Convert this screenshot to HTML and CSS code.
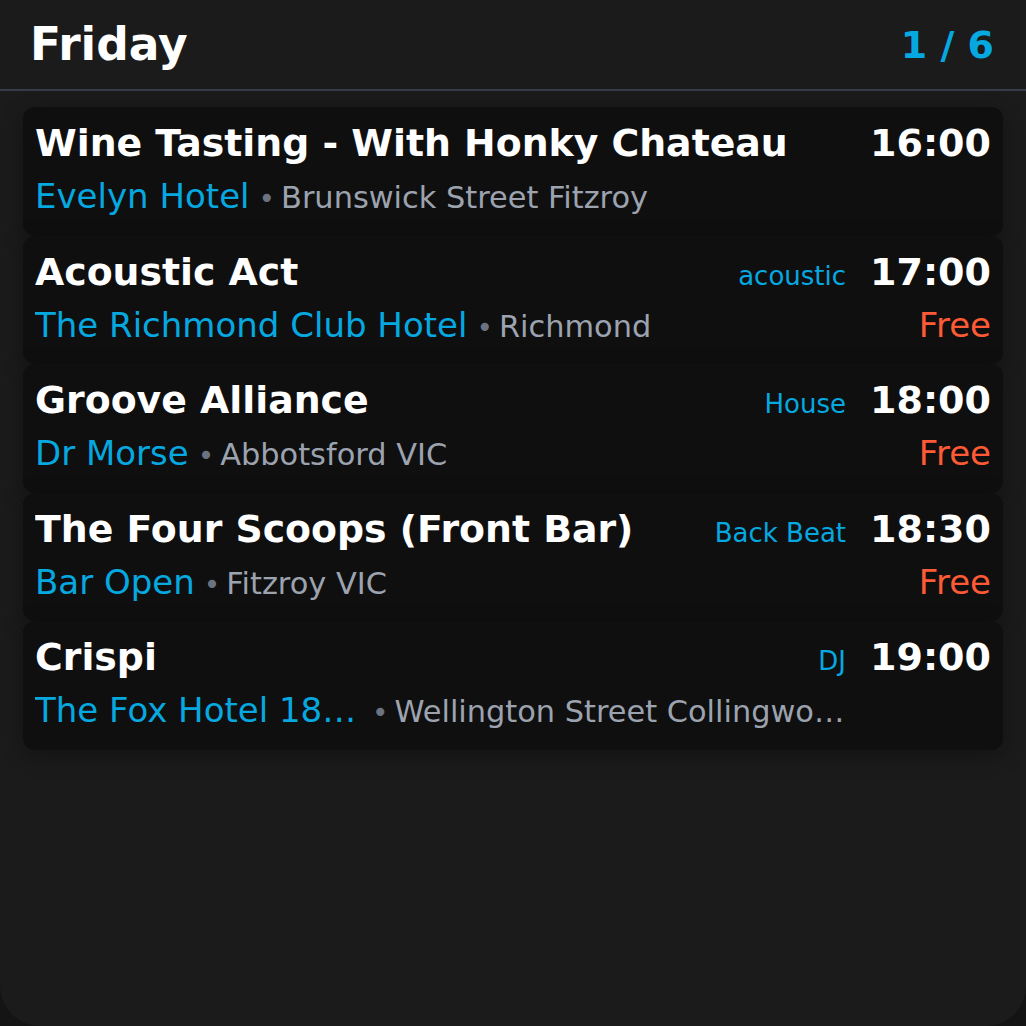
FILE: index.html
```html
<!DOCTYPE html>
<html lang="en">
<head>
<meta charset="utf-8">
<title>Friday</title>
<link rel="stylesheet" href="styles.css">
</head>
<body>
<div class="app">
  <header class="header">
    <h1 class="day">Friday</h1>
    <div class="pager">1 / 6</div>
  </header>
  <main class="list">
    <article class="card">
      <div class="title">Wine Tasting - With Honky Chateau</div>
      <div class="genre"></div>
      <div class="time">16:00</div>
      <div class="where"><span class="venue">Evelyn Hotel</span><span class="sep">•</span><span class="addr">Brunswick Street Fitzroy</span></div>
      <div class="price"></div>
    </article>
    <article class="card">
      <div class="title">Acoustic Act</div>
      <div class="genre">acoustic</div>
      <div class="time">17:00</div>
      <div class="where"><span class="venue">The Richmond Club Hotel</span><span class="sep">•</span><span class="addr">Richmond</span></div>
      <div class="price">Free</div>
    </article>
    <article class="card">
      <div class="title">Groove Alliance</div>
      <div class="genre">House</div>
      <div class="time">18:00</div>
      <div class="where"><span class="venue">Dr Morse</span><span class="sep">•</span><span class="addr">Abbotsford VIC</span></div>
      <div class="price">Free</div>
    </article>
    <article class="card">
      <div class="title">The Four Scoops (Front Bar)</div>
      <div class="genre">Back Beat</div>
      <div class="time">18:30</div>
      <div class="where"><span class="venue">Bar Open</span><span class="sep">•</span><span class="addr">Fitzroy VIC</span></div>
      <div class="price">Free</div>
    </article>
    <article class="card">
      <div class="title">Crispi</div>
      <div class="genre">DJ</div>
      <div class="time">19:00</div>
      <div class="where"><span class="venue venue-limited">The Fox Hotel 187 Wellington Street</span><span class="sep">•</span><span class="addr">Wellington Street Collingwood VIC</span></div>
      <div class="price"></div>
    </article>
  </main>
</div>
</body>
</html>
```

FILE: styles.css
```css
* { box-sizing: border-box; }

html, body {
  margin: 0;
  padding: 0;
  background: #141414;
}

body {
  font-family: "DejaVu Sans", "Liberation Sans", sans-serif;
  color: #ffffff;
}

.app {
  height: 1026px;
  background: #1b1b1b;
  border-radius: 0 0 40px 40px;
  overflow: hidden;
}

.header {
  display: flex;
  align-items: center;
  justify-content: space-between;
  height: 91px;
  padding: 0 32px 0 30px;
  border-bottom: 2px solid #363c48;
}

.day {
  margin: 0;
  font-size: 45.5px;
  font-weight: 700;
  line-height: 56px;
  color: #ffffff;
}

.pager {
  font-size: 38px;
  font-weight: 700;
  line-height: 44px;
  color: #06a8e0;
}

.list {
  display: flex;
  flex-direction: column;
  padding: 16px 23px 0;
}

.card {
  display: grid;
  grid-template-columns: minmax(0, 1fr) auto auto;
  column-gap: 24px;
  row-gap: 11px;
  align-items: baseline;
  padding: 14px 12px 19.5px 12px;
  background: #0f0f0f;
  border-radius: 12px;
  box-shadow: 0 6px 22px rgba(0, 0, 0, 0.3);
}

.title {
  font-size: 37.8px;
  font-weight: 700;
  line-height: 44px;
  white-space: nowrap;
  overflow: hidden;
  text-overflow: ellipsis;
}

.genre {
  font-size: 26px;
  line-height: normal;
  color: #06a8e0;
  text-align: right;
}

.time {
  font-size: 38px;
  font-weight: 700;
  line-height: 44px;
  text-align: right;
}

.where {
  grid-column: 1 / 3;
  display: flex;
  align-items: baseline;
  min-width: 0;
  height: 40px;
  white-space: nowrap;
}

.venue {
  flex: 0 1 auto;
  min-width: 0;
  font-size: 34px;
  line-height: normal;
  color: #06a8e0;
  overflow: hidden;
  text-overflow: ellipsis;
}

.venue-limited {
  max-width: 328px;
}

.sep {
  flex: none;
  margin: 0 6px 0 9px;
  font-size: 28px;
  line-height: normal;
  color: #6b7280;
}

.addr {
  flex: 0 1 auto;
  min-width: 0;
  font-size: 30.4px;
  line-height: normal;
  color: #9ca3af;
  overflow: hidden;
  text-overflow: ellipsis;
}

.price {
  font-size: 34px;
  line-height: 40px;
  color: #ff5a36;
  text-align: right;
}
```
